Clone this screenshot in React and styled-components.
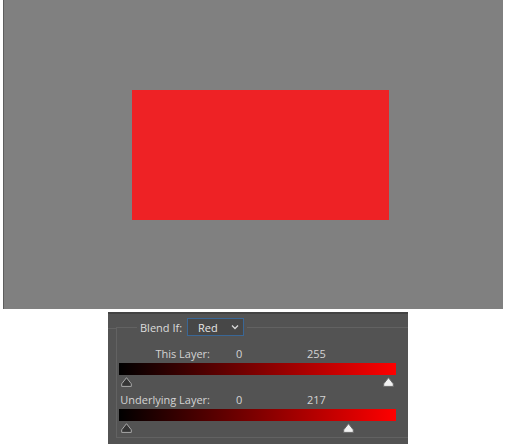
import React from "react";
import styled, { createGlobalStyle } from "styled-components";

const GlobalStyle = createGlobalStyle`
  html, body {
    margin: 0;
    padding: 0;
    background: #ffffff;
  }
  body {
    font-family: "Open Sans", "Noto Sans", sans-serif;
  }
`;

const sliders = [
  { label: "This Layer:", low: 0, high: 255 },
  { label: "Underlying Layer:", low: 0, high: 217 },
];

const Thumb = ({ light, pos }) => (
  <ThumbWrap style={{ left: pos }}>
    <svg width="11" height="10" viewBox="0 0 11 10">
      <path
        d="M5.5 0.7 L10.3 6.8 L10.3 9.4 L0.7 9.4 L0.7 6.8 Z"
        fill={light ? "#f2f2f2" : "#353535"}
        stroke={light ? "#6a6a6a" : "#a9a9a9"}
        strokeWidth="1"
      />
    </svg>
  </ThumbWrap>
);

const Chevron = () => (
  <svg width="8" height="6" viewBox="0 0 8 6">
    <path d="M1 1.5 L4 4.5 L7 1.5" fill="none" stroke="#d8d8d8" strokeWidth="1.3" />
  </svg>
);

const App = () => {
  // thumb centre runs from 7px in to 8px short of the bar end
  const thumbPos = (v) => 7 + (v / 255) * 262 - 5.5;

  return (
    <>
      <GlobalStyle />
      <Canvas>
        <RedRect />
      </Canvas>
      <Panel>
        <Group>
          <Legend>
            <LegendLabel>Blend If:</LegendLabel>
            <Dropdown>
              <span>Red</span>
              <Chevron />
            </Dropdown>
          </Legend>
          {sliders.map((s, i) => (
            <SliderBlock key={s.label}>
              <LabelRow $first={i === 0}>
                <RowLabel>{s.label}</RowLabel>
                <LowValue>{s.low}</LowValue>
                <HighValue>{s.high}</HighValue>
              </LabelRow>
              <Bar />
              <ThumbRow>
                <Thumb pos={thumbPos(s.low)} />
                <Thumb light pos={thumbPos(s.high)} />
              </ThumbRow>
            </SliderBlock>
          ))}
        </Group>
      </Panel>
    </>
  );
};

export default App;

const Canvas = styled.div`
  margin-left: 3px;
  width: 500px;
  height: 309px;
  background: #808080;
  border-left: 1px solid #5e5e5e;
  display: flex;
  align-items: center;
  padding-left: 128px;
  box-sizing: border-box;
`;
const RedRect = styled.div`
  width: 257px;
  height: 130px;
  background: #ee2225;
`;
const Panel = styled.div`
  margin: 3px 0 0 108px;
  width: 300px;
  height: 132px;
  background: #535353;
  border-top: 2px solid #434343;
  box-sizing: border-box;
  padding-top: 4px;
  overflow: hidden;
  position: relative;
  &::before {
    content: "";
    position: absolute;
    left: 0;
    top: 14px;
    width: 9px;
    border-top: 1px solid #626262;
  }
`;
const Group = styled.fieldset`
  margin: 0 0 0 8px;
  padding: 0 0 0 2px;
  border: 1px solid #626262;
  border-right: none;
  min-width: 0;
  height: 120px;
  box-sizing: border-box;
`;
const Legend = styled.legend`
  display: flex;
  align-items: center;
  gap: 5px;
  padding: 0 3px;
  margin-left: 18px;
`;
const LegendLabel = styled.span`
  font-size: 11px;
  color: #dcdcdc;
`;
const Dropdown = styled.div`
  width: 57px;
  height: 18px;
  box-sizing: border-box;
  border: 1px solid #3a6796;
  background: #474747;
  display: flex;
  align-items: center;
  justify-content: space-between;
  padding: 0 4px 0 10px;
  font-size: 11px;
  color: #e6e6e6;
`;
const SliderBlock = styled.div`
  display: flex;
  flex-direction: column;
`;
const LabelRow = styled.div`
  display: grid;
  grid-template-columns: 91px 27px 40px;
  align-items: center;
  height: 14px;
  margin-top: ${(p) => (p.$first ? "10px" : "5px")};
  font-size: 11px;
  color: #d4d4d4;
`;
const RowLabel = styled.span`
  text-align: right;
`;
const LowValue = styled.span`
  padding-left: 26px;
  grid-column: 2;
`;
const HighValue = styled.span`
  padding-left: 70px;
  grid-column: 3;
  white-space: nowrap;
`;
const Bar = styled.div`
  margin-top: 3px;
  width: 277px;
  height: 12px;
  background: linear-gradient(to right, #000000, #ff0000);
`;
const ThumbRow = styled.div`
  position: relative;
  height: 12px;
`;
const ThumbWrap = styled.div`
  position: absolute;
  top: 2px;
  width: 11px;
  height: 10px;
  svg {
    display: block;
  }
`;
